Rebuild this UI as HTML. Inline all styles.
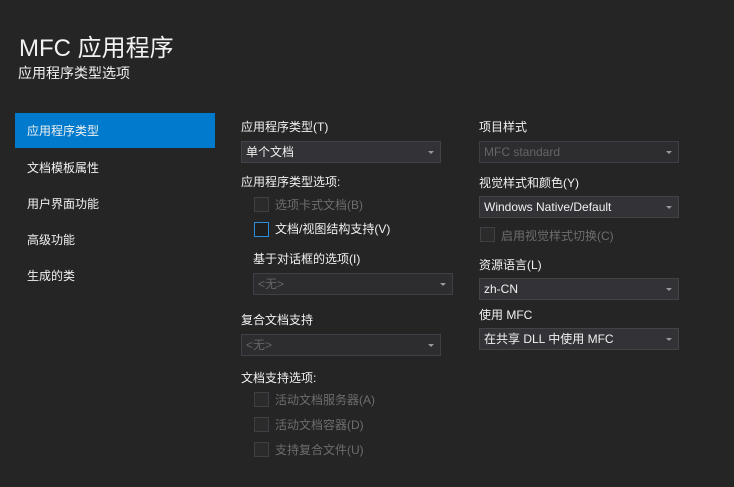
<!DOCTYPE html>
<html><head><meta charset="utf-8"><style>
body{margin:0;width:734px;height:487px;background:#252526;overflow:hidden;font-family:"Liberation Sans","Noto Sans CJK SC",sans-serif;color:#f1f1f1;font-size:12px;position:relative}
.a{position:absolute;white-space:nowrap;line-height:14px}
.cb{position:absolute;width:13px;height:13px;border:1px solid #3f3f46;background:#2b2b2c}
.cmb{position:absolute;height:20px;width:194px;border:1px solid #434346;background:#333337;line-height:20px;padding-left:4px;box-sizing:content-box;color:#f1f1f1;font-size:12px}
.cmb.d{background:#2d2d30;color:#656565;border-color:#3f3f46}
.cmb:after{content:"";position:absolute;right:6px;top:9px;border-left:3px solid transparent;border-right:3px solid transparent;border-top:3px solid #999}
.dis{color:#6d6d6d}
</style></head><body>
<div class="a" style="left:19px;top:34px;font-size:24px;line-height:29px;color:#f1f1f1">MFC 应用程序</div>
<div class="a" style="left:18px;top:64px;font-size:14px;line-height:18px">应用程序类型选项</div>
<div style="position:absolute;left:15px;top:113px;width:200px;height:35px;background:#007acc"></div>
<div class="a" style="left:27px;top:124px">应用程序类型</div>
<div class="a" style="left:27px;top:161px">文档模板属性</div>
<div class="a" style="left:27px;top:197px">用户界面功能</div>
<div class="a" style="left:27px;top:233px">高级功能</div>
<div class="a" style="left:27px;top:269px">生成的类</div>

<div class="a" style="left:241px;top:120px">应用程序类型(T)</div>
<div class="cmb" style="left:241px;top:141px">单个文档</div>
<div class="a" style="left:241px;top:175px">应用程序类型选项:</div>
<div class="cb" style="left:254px;top:197px"></div><div class="a dis" style="left:275px;top:198px">选项卡式文档(B)</div>
<div class="cb" style="left:254px;top:222px;border-color:#2d8cd8;background:#1e1e1e"></div><div class="a" style="left:275px;top:222px">文档/视图结构支持(V)</div>
<div class="a" style="left:253px;top:252px">基于对话框的选项(I)</div>
<div class="cmb d" style="left:253px;top:273px">&lt;无&gt;</div>
<div class="a" style="left:241px;top:313px">复合文档支持</div>
<div class="cmb d" style="left:241px;top:334px">&lt;无&gt;</div>
<div class="a" style="left:241px;top:371px">文档支持选项:</div>
<div class="cb" style="left:254px;top:392px"></div><div class="a dis" style="left:275px;top:393px">活动文档服务器(A)</div>
<div class="cb" style="left:254px;top:417px"></div><div class="a dis" style="left:275px;top:418px">活动文档容器(D)</div>
<div class="cb" style="left:254px;top:442px"></div><div class="a dis" style="left:275px;top:443px">支持复合文件(U)</div>

<div class="a" style="left:479px;top:120px">项目样式</div>
<div class="cmb d" style="left:479px;top:141px">MFC standard</div>
<div class="a" style="left:479px;top:176px">视觉样式和颜色(Y)</div>
<div class="cmb" style="left:479px;top:196px">Windows Native/Default</div>
<div class="cb" style="left:480px;top:227px"></div><div class="a dis" style="left:501px;top:229px">启用视觉样式切换(C)</div>
<div class="a" style="left:479px;top:258px">资源语言(L)</div>
<div class="cmb" style="left:479px;top:278px">zh-CN</div>
<div class="a" style="left:479px;top:308px">使用 MFC</div>
<div class="cmb" style="left:479px;top:328px">在共享 DLL 中使用 MFC</div>
</body></html>
